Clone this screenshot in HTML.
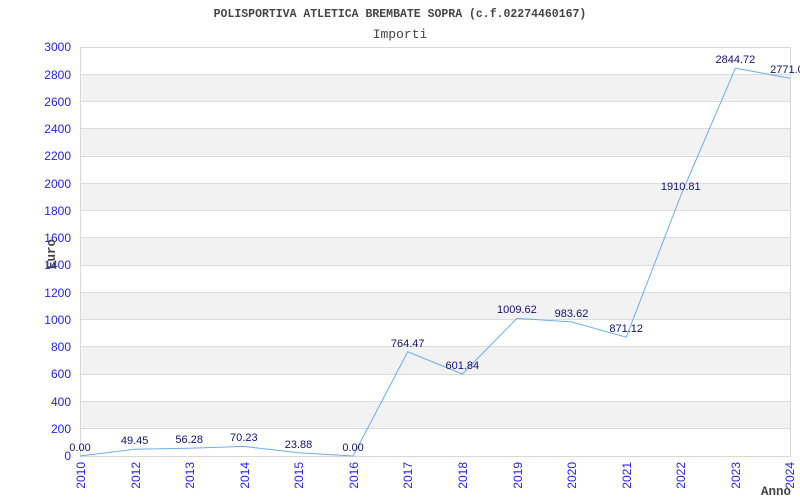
<!DOCTYPE html>
<html><head><meta charset="utf-8"><style>
html,body{margin:0;padding:0;background:#fff;width:800px;height:500px;overflow:hidden}
</style></head><body>
<svg width="800" height="500" xmlns="http://www.w3.org/2000/svg" font-family="Liberation Sans, sans-serif">
<rect width="800" height="500" fill="#fff"/>
<g fill="#f2f2f2">
<rect x="80" y="401.5" width="710" height="27.3"/>
<rect x="80" y="346.9" width="710" height="27.3"/>
<rect x="80" y="292.4" width="710" height="27.3"/>
<rect x="80" y="237.8" width="710" height="27.3"/>
<rect x="80" y="183.3" width="710" height="27.3"/>
<rect x="80" y="128.7" width="710" height="27.3"/>
<rect x="80" y="74.3" width="710" height="27.3"/>
</g>
<g stroke="#dcdcdc" stroke-width="1">
<line x1="80" x2="790" y1="428.5" y2="428.5"/><line x1="80" x2="790" y1="401.5" y2="401.5"/>
<line x1="80" x2="790" y1="374.5" y2="374.5"/><line x1="80" x2="790" y1="346.5" y2="346.5"/>
<line x1="80" x2="790" y1="319.5" y2="319.5"/><line x1="80" x2="790" y1="292.5" y2="292.5"/>
<line x1="80" x2="790" y1="265.5" y2="265.5"/><line x1="80" x2="790" y1="237.5" y2="237.5"/>
<line x1="80" x2="790" y1="210.5" y2="210.5"/><line x1="80" x2="790" y1="183.5" y2="183.5"/>
<line x1="80" x2="790" y1="156.5" y2="156.5"/><line x1="80" x2="790" y1="128.5" y2="128.5"/>
<line x1="80" x2="790" y1="101.5" y2="101.5"/><line x1="80" x2="790" y1="74.5" y2="74.5"/>
</g>
<rect x="80.5" y="47.5" width="710" height="409" fill="none" stroke="#d8d8d8"/>
<g font-size="12" fill="#2222ee" text-anchor="end">
<text x="71" y="460">0</text><text x="71" y="433">200</text><text x="71" y="406">400</text>
<text x="71" y="378">600</text><text x="71" y="351">800</text><text x="71" y="324">1000</text>
<text x="71" y="297">1200</text><text x="71" y="269">1400</text><text x="71" y="242">1600</text>
<text x="71" y="215">1800</text><text x="71" y="188">2000</text><text x="71" y="160">2200</text>
<text x="71" y="133">2400</text><text x="71" y="106">2600</text><text x="71" y="79">2800</text>
<text x="71" y="51">3000</text>
</g>
<g font-size="12" fill="#2222ee" text-anchor="end">
<text transform="translate(85,462) rotate(-90)">2010</text>
<text transform="translate(140,462) rotate(-90)">2012</text>
<text transform="translate(194,462) rotate(-90)">2013</text>
<text transform="translate(249,462) rotate(-90)">2014</text>
<text transform="translate(303,462) rotate(-90)">2015</text>
<text transform="translate(358,462) rotate(-90)">2016</text>
<text transform="translate(412,462) rotate(-90)">2017</text>
<text transform="translate(467,462) rotate(-90)">2018</text>
<text transform="translate(522,462) rotate(-90)">2019</text>
<text transform="translate(576,462) rotate(-90)">2020</text>
<text transform="translate(631,462) rotate(-90)">2021</text>
<text transform="translate(685,462) rotate(-90)">2022</text>
<text transform="translate(740,462) rotate(-90)">2023</text>
<text transform="translate(794,462) rotate(-90)">2024</text>
</g>
<polyline fill="none" stroke="#6aaef0" stroke-width="1" points="80,456 134.6,449.3 189.2,448.3 243.8,446.4 298.5,452.7 353.1,456 407.7,351.8 462.3,374 516.9,318.4 571.5,321.9 626.2,337.2 680.8,195.5 735.4,68.2 790,78.2"/>
<g font-size="11" fill="#111177" text-anchor="middle">
<text x="80" y="451">0.00</text><text x="134.6" y="444">49.45</text><text x="189.2" y="443">56.28</text>
<text x="243.8" y="441">70.23</text><text x="298.5" y="448">23.88</text><text x="353.1" y="451">0.00</text>
<text x="407.7" y="347">764.47</text><text x="462.3" y="369">601.84</text><text x="516.9" y="313">1009.62</text>
<text x="571.5" y="317">983.62</text><text x="626.2" y="332">871.12</text><text x="680.8" y="190">1910.81</text>
<text x="735.4" y="63">2844.72</text><text x="790" y="73">2771.00</text>
</g>
<text x="400" y="17" text-anchor="middle" font-family="Liberation Mono, monospace" font-weight="bold" font-size="11.5" fill="#444">POLISPORTIVA ATLETICA BREMBATE SOPRA (c.f.02274460167)</text>
<text x="400" y="38" text-anchor="middle" font-family="Liberation Mono, monospace" font-size="13" fill="#444">Importi</text>
<text transform="translate(55,254) rotate(-90)" text-anchor="middle" font-family="Liberation Mono, monospace" font-weight="bold" font-size="12.5" fill="#444">Euro</text>
<text x="761" y="495" font-family="Liberation Mono, monospace" font-weight="bold" font-size="12.5" fill="#444">Anno</text>
</svg>
</body></html>
